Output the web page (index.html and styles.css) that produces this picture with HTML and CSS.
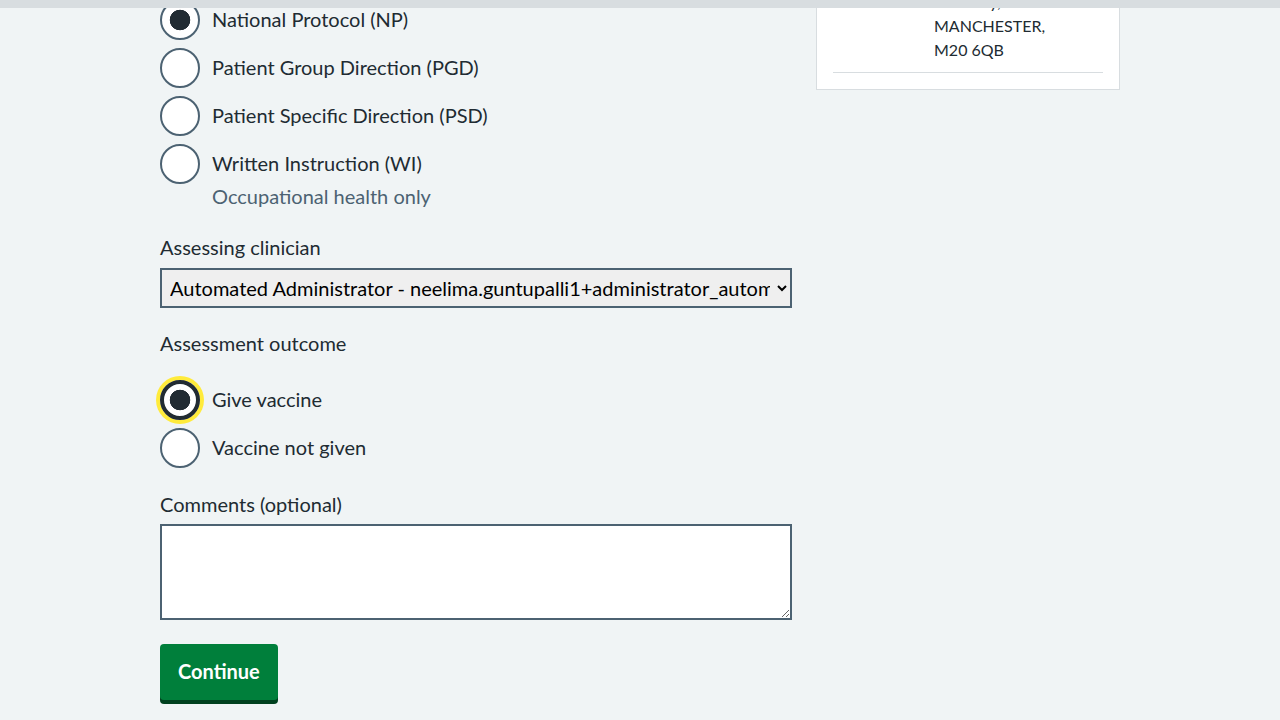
FILE: index.html
```html
<!DOCTYPE html>
<html lang="en">
<head>
<meta charset="utf-8">
<title>Assessment</title>
<link rel="stylesheet" href="styles.css">
</head>
<body>
<div class="topbar"></div>
<div class="container">
  <main class="main">
    <div class="radios">
      <div class="radio">
        <input type="radio" name="protocol" id="np" checked>
        <div class="radio-text"><label for="np">National Protocol (NP)</label></div>
      </div>
      <div class="radio">
        <input type="radio" name="protocol" id="pgd">
        <div class="radio-text"><label for="pgd">Patient Group Direction (PGD)</label></div>
      </div>
      <div class="radio">
        <input type="radio" name="protocol" id="psd">
        <div class="radio-text"><label for="psd">Patient Specific Direction (PSD)</label></div>
      </div>
      <div class="radio">
        <input type="radio" name="protocol" id="wi">
        <div class="radio-text">
          <label for="wi">Written Instruction (WI)</label>
          <div class="hint">Occupational health only</div>
        </div>
      </div>
    </div>

    <div class="form-group group-clinician">
      <label class="field-label" for="clinician">Assessing clinician</label>
      <select class="select" id="clinician">
        <option>Automated Administrator - neelima.guntupalli1+administrator_automated@nhs.net</option>
      </select>
    </div>

    <fieldset class="form-group fieldset">
      <legend class="legend">Assessment outcome</legend>
      <div class="radios">
        <div class="radio">
          <input type="radio" name="outcome" id="give" class="focused" checked>
          <div class="radio-text"><label for="give">Give vaccine</label></div>
        </div>
        <div class="radio">
          <input type="radio" name="outcome" id="notgiven">
          <div class="radio-text"><label for="notgiven">Vaccine not given</label></div>
        </div>
      </div>
    </fieldset>

    <div class="form-group group-comments">
      <label class="field-label" for="comments">Comments (optional)</label>
      <textarea class="textarea" id="comments"></textarea>
    </div>

    <button class="button" type="submit">Continue</button>
  </main>

  <aside class="side">
    <div class="card">
      <dl class="summary">
        <div class="summary-row">
          <dt>Address</dt>
          <dd>Wilmslow Road,<br>Didsbury,<br>MANCHESTER,<br>M20 6QB</dd>
        </div>
      </dl>
    </div>
  </aside>
</div>
</body>
</html>
```

FILE: styles.css
```css
html, body {
  margin: 0;
  padding: 0;
}
body {
  background: #f0f4f5;
  color: #212b32;
  font-family: "Lato", "Noto Sans", Arial, sans-serif;
  font-size: 20px;
  line-height: 28px;
}
.topbar {
  position: fixed;
  top: 0;
  left: 0;
  right: 0;
  height: 8px;
  background: #d8dde0;
  z-index: 10;
}
.container {
  width: 960px;
  margin: 0 auto;
  display: grid;
  grid-template-columns: 632px 304px;
  column-gap: 24px;
  align-items: start;
}
.main {
  padding-bottom: 16px;
}
.radios {
  display: flex;
  flex-direction: column;
  gap: 8px;
}
.radio {
  display: flex;
  align-items: flex-start;
}
.radio input {
  appearance: none;
  -webkit-appearance: none;
  flex: none;
  width: 40px;
  height: 40px;
  margin: 0;
  border: 2px solid #4c6272;
  border-radius: 50%;
  background: #fff;
  box-sizing: border-box;
}
.radio input:checked {
  background: radial-gradient(circle, #212b32 0 10px, #fff 10.6px);
}
.radio input.focused {
  border: 4px solid #212b32;
  box-shadow: 0 0 0 4px #ffeb3b;
}
.radio-text {
  display: flex;
  flex-direction: column;
}
.radio-text label {
  padding: 5px 12px 7px;
}
.hint {
  padding: 0 12px;
  color: #4c6272;
  margin-top: -2px;
}
.form-group {
  margin-top: 21px;
}
.group-clinician {
  margin-top: 23px;
}
.group-comments {
  margin-top: 22px;
}
.field-label {
  display: block;
  margin-bottom: 4px;
}
.group-clinician .field-label {
  margin-bottom: 7px;
}
.group-comments .field-label {
  margin-bottom: 6px;
}
.fieldset {
  border: 0;
  padding: 0;
  margin-left: 0;
  margin-right: 0;
  margin-bottom: 0;
  min-width: 0;
}
.legend {
  padding: 0;
  margin-bottom: 23px;
}
.select {
  display: block;
  width: 632px;
  height: 40px;
  box-sizing: border-box;
  border: 2px solid #4c6272;
  border-radius: 0;
  background-color: #efefef;
  color: #000;
  font-family: inherit;
  font-size: 20px;
  padding: 0 4px 0 4px;
}
.textarea {
  display: block;
  width: 632px;
  height: 96px;
  box-sizing: border-box;
  border: 2px solid #4c6272;
  border-radius: 0;
  background: #fff;
  font-family: inherit;
  font-size: 20px;
  margin: 0;
}
.button {
  margin-top: 24px;
  background: #007f3b;
  color: #fff;
  font-family: inherit;
  font-size: 20px;
  font-weight: 700;
  line-height: 28px;
  border: 2px solid transparent;
  border-radius: 4px;
  box-shadow: 0 4px 0 #00401e;
  padding: 11px 16px 13px;
  cursor: pointer;
}
.side {
  margin-top: -59px;
}
.card {
  background: #fff;
  border: 1px solid #d8dde0;
  padding: 16px 16px 16px;
}
.summary {
  margin: 0;
  font-size: 16px;
  line-height: 24px;
}
.summary-row {
  display: flex;
  padding: 8px 0 10px;
  border-bottom: 1px solid #d8dde0;
}
.summary-row dt {
  width: 101px;
  flex: none;
  font-weight: 700;
}
.summary-row dd {
  margin: 0;
}
```
